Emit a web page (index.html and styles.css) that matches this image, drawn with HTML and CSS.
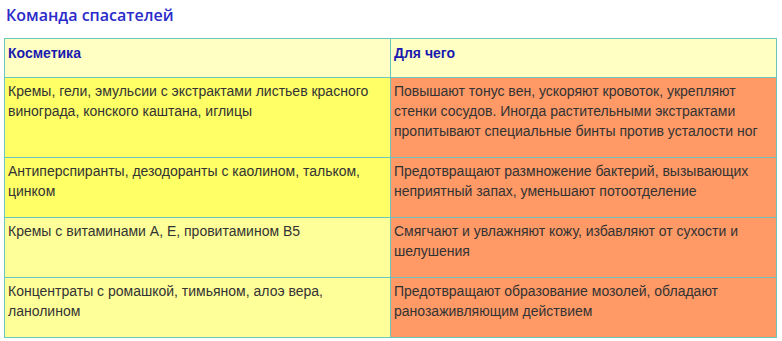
FILE: index.html
```html
<!DOCTYPE html>
<html lang="ru">
<head>
<meta charset="utf-8">
<title>Команда спасателей</title>
<link rel="stylesheet" href="styles.css">
</head>
<body>
<h2 class="title">Команда спасателей</h2>
<table class="tbl">
  <thead>
    <tr class="head">
      <th class="c1">Косметика</th>
      <th class="c2">Для чего</th>
    </tr>
  </thead>
  <tbody>
    <tr>
      <td class="c1 bright">Кремы, гели, эмульсии с экстрактами листьев красного винограда, конского каштана, иглицы</td>
      <td class="c2 orange">Повышают тонус вен, ускоряют кровоток, укрепляют стенки сосудов. Иногда растительными экстрактами пропитывают специальные бинты против усталости ног</td>
    </tr>
    <tr>
      <td class="c1 bright">Антиперспиранты, дезодоранты с каолином, тальком, цинком</td>
      <td class="c2 orange">Предотвращают размножение бактерий, вызывающих неприятный запах, уменьшают потоотделение</td>
    </tr>
    <tr>
      <td class="c1 pale">Кремы с витаминами А, Е, провитамином В5</td>
      <td class="c2 orange">Смягчают и увлажняют кожу, избавляют от сухости и шелушения</td>
    </tr>
    <tr>
      <td class="c1 pale">Концентраты с ромашкой, тимьяном, алоэ вера, ланолином</td>
      <td class="c2 orange">Предотвращают образование мозолей, обладают ранозаживляющим действием</td>
    </tr>
  </tbody>
</table>
</body>
</html>
```
FILE: styles.css
```css
html, body {
  margin: 0;
  padding: 0;
  background: #ffffff;
}
body {
  padding: 4px 5px 0 4px;
  font-family: "Liberation Sans", Arial, sans-serif;
}
.title {
  margin: 0 0 12px 2px;
  font-family: "Open Sans", "DejaVu Sans", sans-serif;
  font-size: 16px;
  font-weight: 600;
  line-height: 22px;
  color: #2b2bc9;
}
.tbl {
  width: 773px;
  border-collapse: collapse;
  font-size: 14px;
  line-height: 20px;
  color: #333333;
}
.tbl th, .tbl td {
  border: 1px solid #6cc6c0;
  text-align: left;
  vertical-align: top;
  padding: 3px 4px 16px 3px;
}
.tbl .c1 {
  width: 378px;
}
.head th {
  background: #ffffc4;
  color: #1a1ab0;
  font-weight: bold;
  padding-top: 4px;
  padding-bottom: 14px;
}
.bright {
  background: #ffff66;
}
.pale {
  background: #ffff99;
}
.orange {
  background: #ff9966;
}
```
